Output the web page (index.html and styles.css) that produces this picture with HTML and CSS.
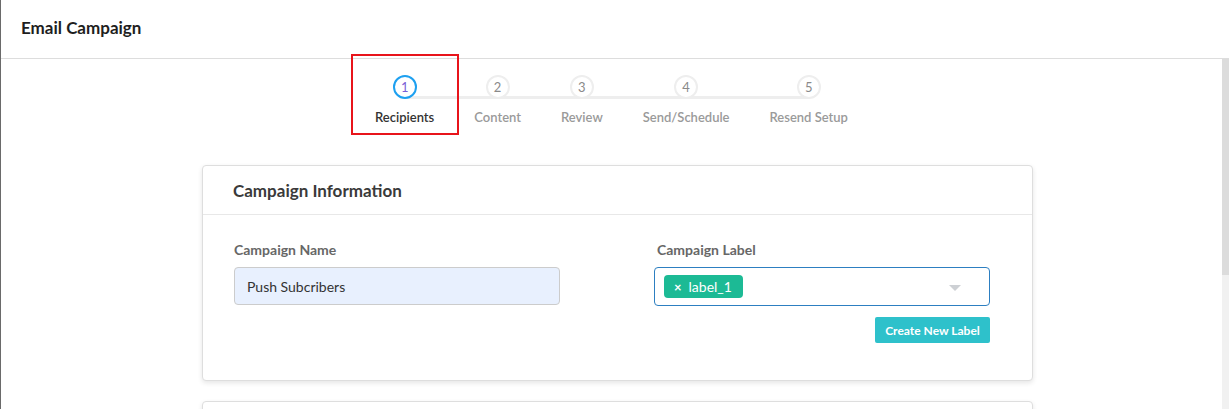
FILE: index.html
```html
<!DOCTYPE html>
<html>
<head>
<meta charset="utf-8">
<link rel="stylesheet" href="styles.css">
</head>
<body>
<div class="app">
  <header class="topbar">
    <h1 class="page-title">Email Campaign</h1>
  </header>
  <div class="main-row">
    <main class="content">
      <div class="steps-wrap">
        <ol class="steps">
          <li class="step active"><span class="circle">1</span><span class="step-label">Recipients</span></li>
          <li class="step"><span class="circle">2</span><span class="step-label">Content</span></li>
          <li class="step"><span class="circle">3</span><span class="step-label">Review</span></li>
          <li class="step"><span class="circle">4</span><span class="step-label">Send/Schedule</span></li>
          <li class="step"><span class="circle">5</span><span class="step-label">Resend Setup</span></li>
        </ol>
      </div>
      <section class="card">
        <div class="card-header">Campaign Information</div>
        <div class="card-body">
          <div class="col col-left">
            <label class="field-label">Campaign Name</label>
            <div class="text-input">Push Subcribers</div>
          </div>
          <div class="col col-right">
            <label class="field-label">Campaign Label</label>
            <div class="select-box">
              <span class="tag"><span class="tag-x">×</span>label_1</span>
              <span class="caret"></span>
            </div>
            <div class="btn-row"><button class="btn">Create New Label</button></div>
          </div>
        </div>
      </section>
      <section class="card card-next"></section>
    </main>
    <div class="scrollbar"><div class="thumb"></div></div>
  </div>
  <div class="highlight"></div>
</div>
</body>
</html>
```

FILE: styles.css
```css
* { box-sizing: border-box; }
html, body { margin: 0; padding: 0; }
body {
  font-family: Lato, "Open Sans", sans-serif;
  background: #fff;
  width: 1229px;
  height: 409px;
  overflow: hidden;
}
.app {
  position: relative;
  height: 409px;
  border-left: 1px solid #6a6a6a;
}
.topbar {
  height: 59px;
  border-bottom: 1px solid #dddddd;
  display: flex;
  align-items: center;
  padding-left: 20px;
  padding-bottom: 3px;
}
.page-title {
  margin: 0;
  font-size: 17px;
  font-weight: 700;
  color: #1e1e1e;
}
.main-row {
  display: flex;
  height: 350px;
}
.content {
  flex: 1;
  overflow: hidden;
}
.scrollbar {
  width: 7px;
  background: #f1f1f1;
}
.thumb {
  height: 216px;
  background: #dcdcdc;
}
.steps-wrap {
  display: flex;
  justify-content: center;
  padding-top: 16px;
}
.steps {
  position: relative;
  list-style: none;
  margin: 0;
  padding: 0;
  display: flex;
  gap: 40px;
}
.steps::before {
  content: "";
  position: absolute;
  left: 30px;
  right: 40px;
  top: 21px;
  height: 3px;
  background: #eeeeee;
}
.step {
  position: relative;
  display: flex;
  flex-direction: column;
  align-items: center;
}
.circle {
  width: 24px;
  height: 24px;
  border-radius: 50%;
  border: 2px solid #eeeeee;
  background: #fff;
  display: flex;
  align-items: center;
  justify-content: center;
  font-size: 13px;
  color: #8a8a8a;
  position: relative;
}
.step.active .circle {
  border-color: #1ea0f0;
  color: #7b5fd6;
}
.step-label {
  margin-top: 10px;
  font-size: 13px;
  font-weight: 600;
  color: #9a9a9a;
  line-height: 16px;
}
.step.active .step-label { color: #333; }
.card {
  margin-left: 201px;
  width: 831px;
  margin-top: 40px;
  border: 1px solid #dedede;
  border-radius: 4px;
  background: #fff;
  box-shadow: 0 2px 5px rgba(0,0,0,0.10);
}
.card-header {
  height: 49px;
  border-bottom: 1px solid #e8e8e8;
  padding-left: 30px;
  display: flex;
  align-items: center;
  font-size: 17px;
  font-weight: 700;
  color: #3a3a3a;
}
.card-body {
  display: flex;
  gap: 94px;
  padding: 26px 42px 37px 31px;
}
.col-left { width: 326px; }
.col-right { flex: 1; }
.field-label {
  display: block;
  font-size: 14px;
  font-weight: 700;
  color: #676767;
  line-height: 17px;
  margin-bottom: 9px;
}
.col-right .field-label { padding-left: 3px; }
.text-input {
  height: 38px;
  background: #e8f0fe;
  border: 1px solid #cccccc;
  border-radius: 4px;
  padding-left: 12px;
  display: flex;
  align-items: center;
  font-size: 14px;
  color: #333;
}
.select-box {
  height: 39px;
  border: 1px solid #2d7fc1;
  border-radius: 4px;
  display: flex;
  align-items: center;
  padding-left: 9px;
  padding-right: 28px;
  justify-content: space-between;
}
.tag {
  height: 23px;
  background: #1cba95;
  border-radius: 4px;
  color: #fff;
  font-size: 14px;
  display: flex;
  align-items: center;
  padding: 0 11px 0 10px;
}
.tag-x {
  font-size: 13px;
  font-weight: 700;
  margin-right: 7px;
}
.caret {
  width: 0;
  height: 0;
  border-left: 6px solid transparent;
  border-right: 6px solid transparent;
  border-top: 6px solid #cdd0d4;
  margin-top: 2px;
}
.btn-row {
  display: flex;
  justify-content: flex-end;
  margin-top: 11px;
}
.btn {
  height: 26px;
  width: 115px;
  border: none;
  border-radius: 2px;
  background: #2ec1cb;
  color: #fff;
  font-family: Lato, sans-serif;
  font-size: 12px;
  font-weight: 700;
  padding: 0;
}
.card-next {
  margin-top: 20px;
  height: 60px;
}
.highlight {
  position: absolute;
  left: 350px;
  top: 54px;
  width: 108px;
  height: 81px;
  border: 2px solid #e8141b;
}
```
